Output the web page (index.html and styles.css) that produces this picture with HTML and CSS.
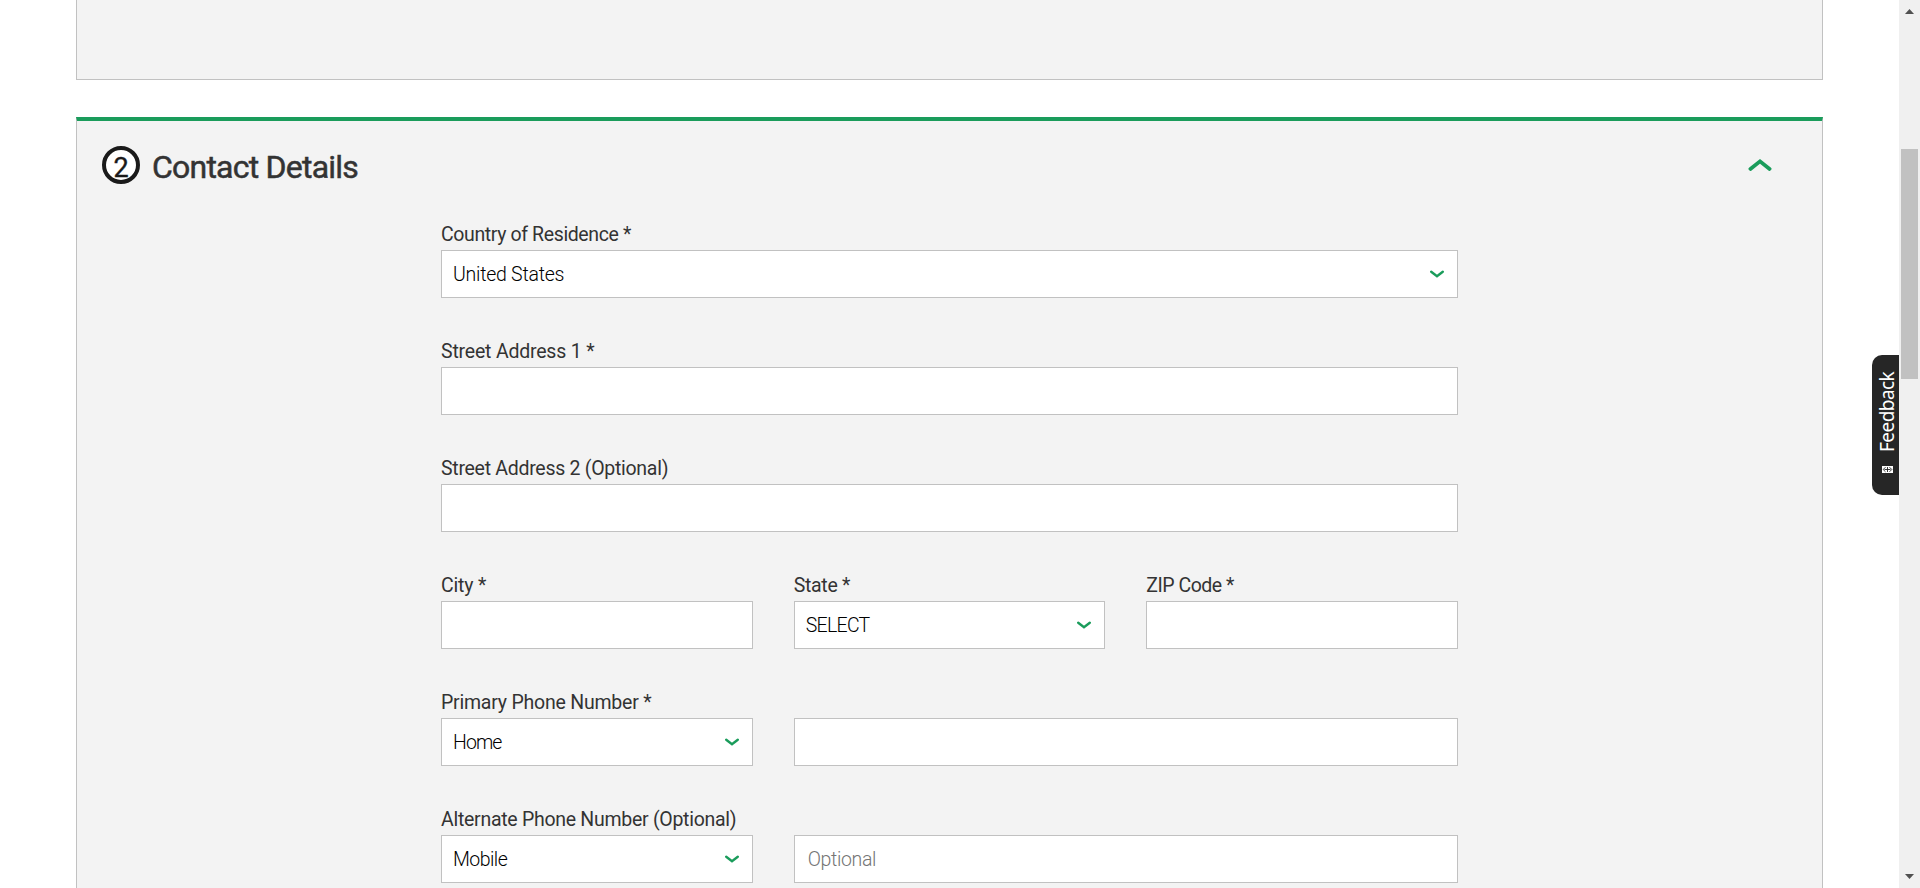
FILE: index.html
```html
<!DOCTYPE html>
<html lang="en">
<head>
<meta charset="utf-8">
<title>Contact Details</title>
<link rel="stylesheet" href="styles.css">
</head>
<body>
<svg class="defs" width="0" height="0"><symbol id="chev" viewBox="0 0 14 9"><path d="M1.2 1.7 7 6.2l5.8-4.5" fill="none" stroke="#1a9c5b" stroke-width="2.4" stroke-linecap="round"/></symbol></svg>
<main class="page">
  <section class="panel panel-previous"></section>
  <section class="panel panel-contact">
    <header class="panel-header">
      <span class="step"><span class="step-number">2</span></span>
      <h2 class="title">Contact Details</h2>
      <svg class="collapse" width="24" height="14" viewBox="0 0 24 14"><path d="M2.4 10.9 12 3.3l9.6 7.6" fill="none" stroke="#1a9c5b" stroke-width="3.8" stroke-linecap="round"/></svg>
    </header>
    <form class="form">
      <div class="field wide"><label class="label l-country">Country of Residence *</label><div class="control"><span class="value v-country">United States</span><svg class="arrow"><use href="#chev"/></svg></div></div>
      <div class="field wide"><label class="label l-street1">Street Address 1 *</label><div class="control"></div></div>
      <div class="field wide"><label class="label l-street2">Street Address 2 (Optional)</label><div class="control"></div></div>
      <div class="field"><label class="label l-city">City *</label><div class="control"></div></div>
      <div class="field"><label class="label l-state">State *</label><div class="control"><span class="value v-state">SELECT</span><svg class="arrow"><use href="#chev"/></svg></div></div>
      <div class="field"><label class="label l-zip">ZIP Code *</label><div class="control"></div></div>
      <div class="field"><label class="label l-primary">Primary Phone Number *</label><div class="control"><span class="value v-home">Home</span><svg class="arrow"><use href="#chev"/></svg></div></div>
      <div class="field double"><div class="control"></div></div>
      <div class="field"><label class="label l-alternate">Alternate Phone Number (Optional)</label><div class="control"><span class="value v-mobile">Mobile</span><svg class="arrow"><use href="#chev"/></svg></div></div>
      <div class="field double"><div class="control"><span class="value placeholder">Optional</span></div></div>
    </form>
  </section>
</main>
<div class="feedback"><span class="feedback-text">Feedback</span><svg class="feedback-icon" width="11" height="7" viewBox="0 0 11 7"><path d="M0 0h11v7H0z" fill="#fff"/><path d="M5.5 1v5M2.5 3.5h6M3.5 1.2 1.2 3.5l2.3 2.3M7.5 1.2l2.3 2.3-2.3 2.3" fill="none" stroke="#262626" stroke-width=".9"/></svg></div>
<div class="scrollbar"><svg width="9" height="5"><path d="M0 5 4.5 0 9 5z" fill="#505050"/></svg><div class="thumb"></div><svg width="9" height="5"><path d="M0 0 4.5 5 9 0z" fill="#505050"/></svg></div>
</body>
</html>
```
FILE: styles.css
```css
* { box-sizing: border-box; }
body { margin: 0; height: 888px; display: flex; overflow: hidden; background: #fff; font-family: Roboto, "Liberation Sans", sans-serif; color: #333; }
.defs { position: absolute; }
.page { flex: 1; height: 888px; overflow: hidden; padding: 0 76px; }
.panel { background: #f3f3f3; border: 1px solid #c1c1c1; }
.panel-previous { height: 80px; border-top: 0; margin-bottom: 37px; }
.panel-contact { height: 900px; border-top: 4px solid #1a9c5b; }
.panel-header { display: flex; align-items: center; height: 88px; padding: 0 50px 0 25px; }
.step { width: 38px; height: 38px; border: 4px solid #1a1a1a; border-radius: 50%; background: #fff; display: flex; justify-content: center; color: #1a1a1a; font-size: 27px; line-height: 36px; }
.step-number { -webkit-text-stroke: 0.4px #1a1a1a; }
.title { flex: 1; margin: 3px 0 0 12px; font-size: 32px; line-height: 36px; font-weight: 400; letter-spacing: -0.78px; -webkit-text-stroke: 0.5px #333; white-space: nowrap; }
.collapse { margin-top: -1px; }
.form { display: grid; grid-template-columns: repeat(3, 1fr); column-gap: 41px; row-gap: 37px; width: 1017px; margin: 9px 0 0 364px; }
.field { height: 80px; display: flex; flex-direction: column; justify-content: flex-end; min-width: 0; }
.wide { grid-column: span 3; }
.double { grid-column: span 2; }
.label { font-size: 19.5px; line-height: 32px; padding-top: 2px; margin-bottom: -1px; white-space: nowrap; }
.l-country { letter-spacing: -0.38px; }
.l-street1 { letter-spacing: -0.2px; }
.l-street2 { letter-spacing: -0.28px; }
.l-city { letter-spacing: -0.2px; }
.l-state { letter-spacing: -0.3px; }
.l-zip { letter-spacing: -0.5px; }
.l-primary { letter-spacing: -0.22px; }
.l-alternate { letter-spacing: -0.28px; }
.control { height: 48px; flex: none; background: #fff; border: 1px solid #c1c1c1; padding: 0 13px 0 11px; display: flex; align-items: center; justify-content: space-between; }
.value { font-size: 19.5px; font-weight: 300; color: #000; white-space: nowrap; }
.v-country { letter-spacing: -0.25px; }
.v-state { letter-spacing: -0.7px; }
.v-home { letter-spacing: -0.9px; }
.v-mobile { letter-spacing: -0.55px; }
.placeholder { color: #757575; margin-left: 2px; letter-spacing: -0.35px; }
.arrow { width: 14px; height: 9px; }
.feedback { position: absolute; left: 1872px; top: 355px; width: 27px; height: 140px; background: #262626; border-radius: 10px 0 0 10px; color: #fff; display: flex; flex-direction: column; align-items: center; padding-top: 16px; }
.feedback-text { writing-mode: vertical-rl; transform: rotate(180deg); margin-left: 4px; font: 19px/27px "Noto Sans", sans-serif; letter-spacing: -0.55px; height: 81px; }
.feedback-icon { margin: 14px 0 0 3px; }
.scrollbar { width: 21px; height: 888px; background: #f0f0f0; display: flex; flex-direction: column; align-items: center; padding: 9px 0; }
.thumb { width: 17px; height: 230px; background: #c1c1c1; margin: 135px 0 auto; }
```
